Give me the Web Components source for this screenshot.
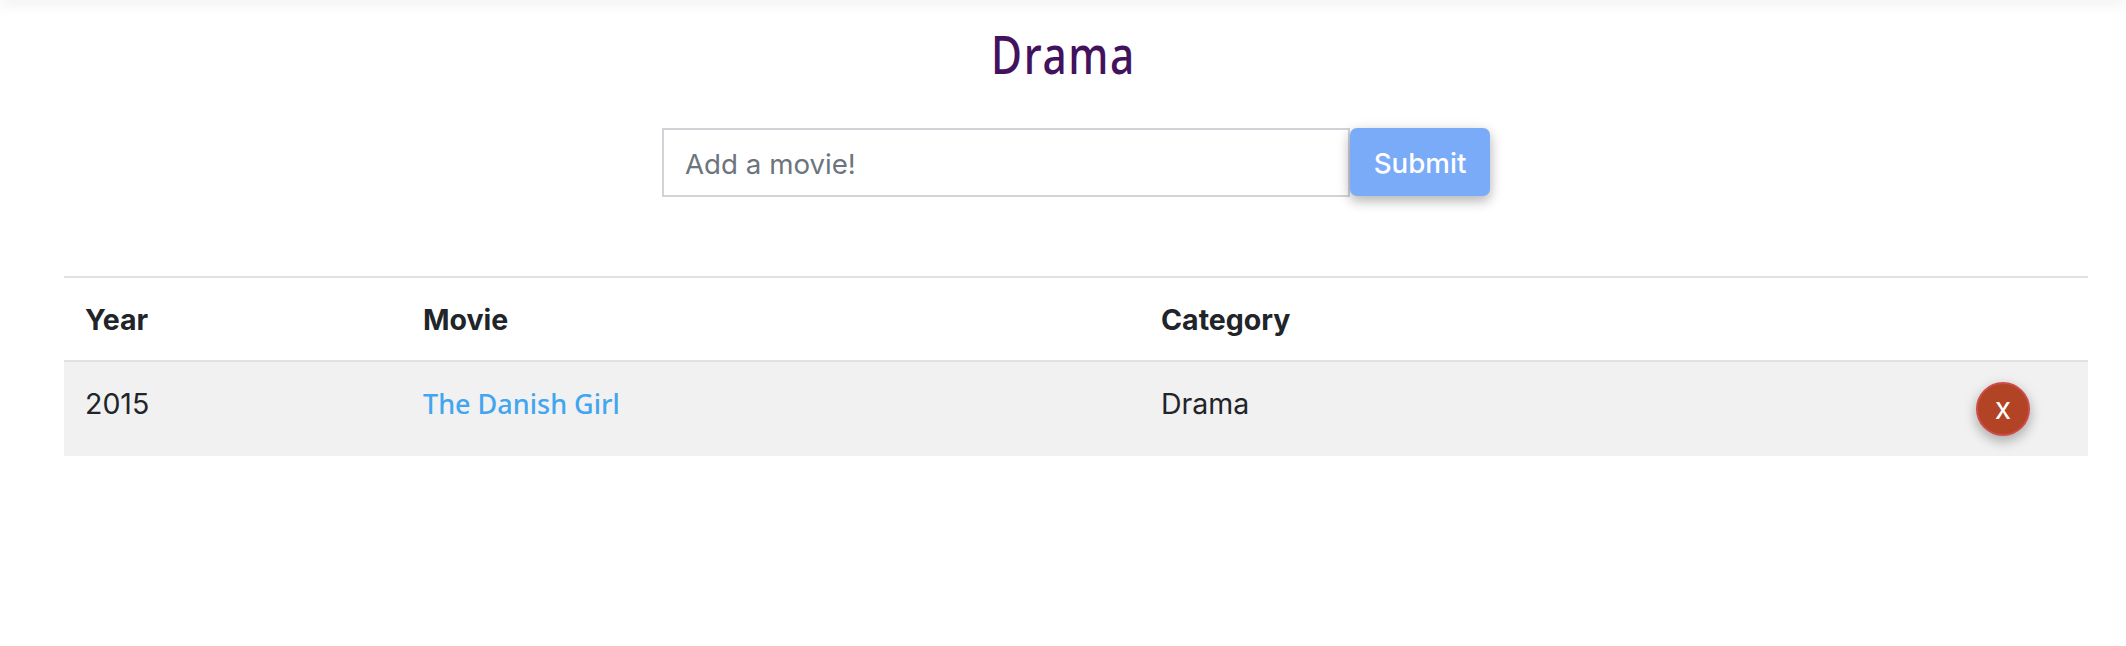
<!DOCTYPE html>
<html lang="en">
<head>
<meta charset="utf-8">
<title>Drama</title>
<style>
  html, body { margin: 0; background: #fff; }
  body { font-family: Inter, "Liberation Sans", sans-serif; color: #212529; }
</style>
</head>
<body>
<movie-page heading="Drama">
  <movie-row year="2015" title="The Danish Girl" category="Drama"></movie-row>
</movie-page>
<script>
class MoviePage extends HTMLElement {
  constructor() {
    super();
    this.attachShadow({ mode: 'open' });
    this.shadowRoot.innerHTML = `
      <style>
        :host { display: block; height: 646px; overflow: hidden; }
        .topbar { height: 1px; margin-top: -1px; box-shadow: 0 1px 14px rgba(0,0,0,.55); }
        h1 {
          margin: 0;
          padding-top: 22px;
          height: 65px;
          text-align: center;
          font-family: "Noto Sans", sans-serif;
          font-weight: 500;
          font-size: 53px;
          line-height: 64px;
          color: #43125f;
        }
        h1 span {
          display: inline-block;
          letter-spacing: 2px;
          transform: scaleX(.8);
        }
        .table { margin: 79px 38px 0 64px; border-top: 2px solid #dee2e6; }
        .head {
          display: grid;
          grid-template-columns: 338px 738px 1fr;
          height: 82px;
          align-items: center;
          border-bottom: 2px solid #dee2e6;
          font-size: 28.5px;
          font-weight: 700;
          color: #212529;
        }
        .head div { padding-left: 21px; }
      </style>
      <div class="topbar"></div>
      <h1><span></span></h1>
      <movie-form></movie-form>
      <div class="table">
        <div class="head"><div>Year</div><div>Movie</div><div>Category</div></div>
        <slot></slot>
      </div>
    `;
    this.shadowRoot.querySelector('h1 span').textContent = this.getAttribute('heading');
  }
}

class MovieForm extends HTMLElement {
  constructor() {
    super();
    this.attachShadow({ mode: 'open' });
    this.shadowRoot.innerHTML = `
      <style>
        :host { display: flex; margin: 41px 0 0 662px; height: 69px; }
        input {
          width: 688px;
          height: 69px;
          box-sizing: border-box;
          padding: 2px 21px 0;
          border: 2px solid #d0d4d8;
          border-radius: 0;
          outline: none;
          background: #fff;
          font-family: Inter, "Liberation Sans", sans-serif;
          font-size: 27.7px;
          color: #495057;
        }
        input::placeholder { color: #6c757d; opacity: 1; }
        button {
          width: 140px;
          height: 68px;
          padding: 2px 0 0;
          border: 0;
          border-radius: 7px;
          background: #7aabf9;
          color: #fff;
          font-family: Inter, "Liberation Sans", sans-serif;
          font-size: 27.7px;
          font-weight: 500;
          box-shadow: 0 5px 11px rgba(0,0,0,.18), 0 4px 15px rgba(0,0,0,.15);
        }
      </style>
      <input type="text" placeholder="Add a movie!">
      <button type="button">Submit</button>
    `;
  }
}

class MovieRow extends HTMLElement {
  constructor() {
    super();
    this.attachShadow({ mode: 'open' });
    this.shadowRoot.innerHTML = `
      <style>
        :host {
          display: grid;
          grid-template-columns: 338px 738px 1fr auto;
          height: 94px;
          background: #f1f1f1;
          font-size: 28.5px;
          color: #212529;
        }
        div { padding: 22px 0 0 21px; line-height: 40px; }
        a {
          font-family: "Noto Sans", sans-serif;
          font-size: 27px;
          font-weight: 500;
          color: #42a5f0;
          text-decoration: none;
        }
        button {
          width: 54px;
          height: 54px;
          margin: 20px 58px 0 0;
          padding: 0 0 2px;
          border: 2px solid #cf4a4a;
          border-radius: 50%;
          background: #b24325;
          color: #fff;
          font-family: Inter, "Liberation Sans", sans-serif;
          font-size: 30px;
          box-shadow: 0 5px 11px rgba(0,0,0,.18), 0 4px 15px rgba(0,0,0,.15);
        }
      </style>
      <div class="year"></div>
      <div><a href="#"></a></div>
      <div class="category"></div>
      <button type="button">x</button>
    `;
    this.shadowRoot.querySelector('.year').textContent = this.getAttribute('year');
    this.shadowRoot.querySelector('a').textContent = this.getAttribute('title');
    this.shadowRoot.querySelector('.category').textContent = this.getAttribute('category');
  }
}

customElements.define('movie-form', MovieForm);
customElements.define('movie-row', MovieRow);
customElements.define('movie-page', MoviePage);
</script>
</body>
</html>
